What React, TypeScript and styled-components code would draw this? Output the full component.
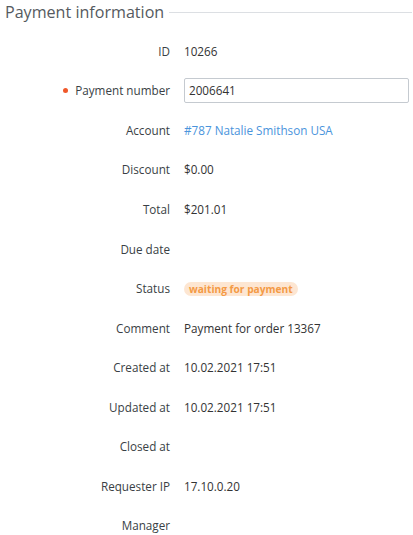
import React from "react";
import styled, { createGlobalStyle } from "styled-components";

const Global = createGlobalStyle`
  html, body { margin: 0; padding: 0; background: #fff; }
  body { font-family: "Open Sans", "Liberation Sans", sans-serif; color: #333; }
`;

const Section = styled.section`
  width: 413px;
  padding: 0 1px 0 5px;
  box-sizing: border-box;
`;

const Header = styled.div`
  display: flex;
  align-items: center;
  height: 24px;
  margin-bottom: 7px;
`;

const Title = styled.h2`
  margin: 0;
  font-size: 16.1px;
  font-weight: 400;
  color: #555a60;
  line-height: 24px;
  white-space: nowrap;
`;

const Rule = styled.div`
  flex: 1;
  height: 1px;
  background: #dcdfe3;
  margin-left: 5px;
`;

const Grid = styled.div`
  display: grid;
  grid-template-columns: 165px 1fr;
  grid-auto-rows: 39.55px;
  column-gap: 14px;
  align-items: center;
`;

const Label = styled.div`
  display: flex;
  align-items: center;
  justify-content: flex-end;
  font-size: 11.7px;
  color: #3a3f45;
  white-space: nowrap;
`;

const Dot = styled.span`
  width: 5px;
  height: 5px;
  border-radius: 50%;
  background: #f0582a;
  margin-right: 7px;
`;

const Value = styled.div`
  font-size: 11.7px;
  color: #333;
  white-space: nowrap;
`;

const Link = styled.a`
  color: #4a94dc;
  text-decoration: none;
`;

const Input = styled.input`
  width: 225px;
  height: 25px;
  box-sizing: border-box;
  border: 1px solid #c5cad0;
  border-radius: 2px;
  padding: 0 4px;
  font-family: inherit;
  font-size: 11.7px;
  color: #333;
  outline: none;
`;

const Badge = styled.span`
  display: inline-block;
  background: #fde6d2;
  color: #f49a45;
  font-weight: 700;
  font-size: 10.2px;
  line-height: 14px;
  padding: 0 5px;
  border-radius: 7px;
`;

const rows: { label: string; value?: React.ReactNode; required?: boolean }[] = [
  { label: "ID", value: "10266" },
  { label: "Payment number", required: true, value: <Input defaultValue="2006641" /> },
  { label: "Account", value: <Link href="#">#787 Natalie Smithson USA</Link> },
  { label: "Discount", value: "$0.00" },
  { label: "Total", value: "$201.01" },
  { label: "Due date" },
  { label: "Status", value: <Badge>waiting for payment</Badge> },
  { label: "Comment", value: "Payment for order 13367" },
  { label: "Created at", value: "10.02.2021 17:51" },
  { label: "Updated at", value: "10.02.2021 17:51" },
  { label: "Closed at" },
  { label: "Requester IP", value: "17.10.0.20" },
  { label: "Manager" },
];

export default function App() {
  return (
    <>
      <Global />
      <Section>
        <Header>
          <Title>Payment information</Title>
          <Rule />
        </Header>
        <Grid>
          {rows.map((r) => (
            <React.Fragment key={r.label}>
              <Label>
                {r.required && <Dot />}
                {r.label}
              </Label>
              <Value>{r.value}</Value>
            </React.Fragment>
          ))}
        </Grid>
      </Section>
    </>
  );
}
